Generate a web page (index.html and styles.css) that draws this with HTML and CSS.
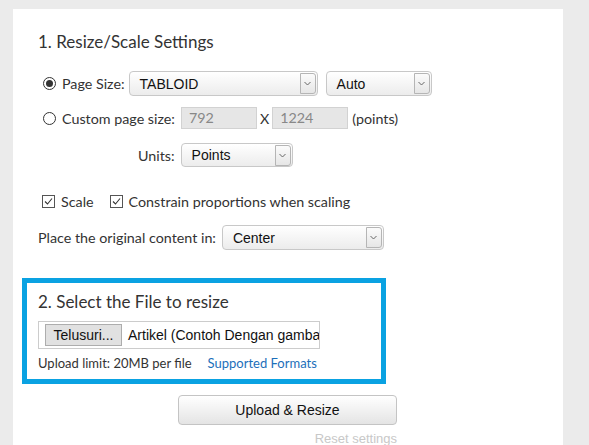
FILE: index.html
```html
<!DOCTYPE html>
<html>
<head>
<meta charset="utf-8">
<title>Resize PDF</title>
<link rel="stylesheet" href="styles.css">
</head>
<body>
  <div class="panel">
    <h2 class="step-title">1. Resize/Scale Settings</h2>

    <div class="row row-size">
      <span class="radio checked"></span>
      <span class="label">Page Size:</span>
      <div class="select sel-size"><span class="sel-text">TABLOID</span><span class="sel-arrow"><svg width="7" height="5" viewBox="0 0 7 5"><path d="M0.5 1 L3.5 4 L6.5 1" fill="none" stroke="#666" stroke-width="1"/></svg></span></div>
      <div class="select sel-orient"><span class="sel-text">Auto</span><span class="sel-arrow"><svg width="7" height="5" viewBox="0 0 7 5"><path d="M0.5 1 L3.5 4 L6.5 1" fill="none" stroke="#666" stroke-width="1"/></svg></span></div>
    </div>

    <div class="row row-custom">
      <span class="radio"></span>
      <span class="label">Custom page size:</span>
      <span class="num-input first">792</span>
      <span class="times">X</span>
      <span class="num-input">1224</span>
      <span class="label points">(points)</span>
    </div>

    <div class="row row-units">
      <span class="label">Units:</span>
      <div class="select sel-units"><span class="sel-text">Points</span><span class="sel-arrow"><svg width="7" height="5" viewBox="0 0 7 5"><path d="M0.5 1 L3.5 4 L6.5 1" fill="none" stroke="#666" stroke-width="1"/></svg></span></div>
    </div>

    <div class="row row-checks">
      <span class="check"><svg width="13" height="13" viewBox="0 0 13 13"><rect x="0.5" y="0.5" width="12" height="12" fill="#fff" stroke="#555"/><path d="M3 6.5 L5.5 9 L10 3.5" fill="none" stroke="#333" stroke-width="1.1"/></svg></span>
      <span class="label">Scale</span>
      <span class="check second"><svg width="13" height="13" viewBox="0 0 13 13"><rect x="0.5" y="0.5" width="12" height="12" fill="#fff" stroke="#555"/><path d="M3 6.5 L5.5 9 L10 3.5" fill="none" stroke="#333" stroke-width="1.1"/></svg></span>
      <span class="label">Constrain proportions when scaling</span>
    </div>

    <div class="row row-place">
      <span class="label">Place the original content in:</span>
      <div class="select sel-place"><span class="sel-text">Center</span><span class="sel-arrow"><svg width="7" height="5" viewBox="0 0 7 5"><path d="M0.5 1 L3.5 4 L6.5 1" fill="none" stroke="#666" stroke-width="1"/></svg></span></div>
    </div>

    <div class="file-box">
      <h2 class="step-title">2. Select the File to resize</h2>
      <div class="file-input">
        <span class="browse">Telusuri...</span>
        <span class="file-name">Artikel (Contoh Dengan gamba</span>
      </div>
      <div class="limits">
        <span>Upload limit: 20MB per file</span>
        <a class="formats" href="#">Supported Formats</a>
      </div>
    </div>

    <div class="actions">
      <span class="upload-btn">Upload &amp; Resize</span>
      <span class="reset">Reset settings</span>
    </div>
  </div>
</body>
</html>
```

FILE: styles.css
```css
body {
  margin: 0;
  background: #ebebeb;
  font-family: "Lato", "Liberation Sans", sans-serif;
  color: #333;
  overflow: hidden;
}

.panel {
  margin: 9px 0 0 13px;
  width: 550px;
  height: 480px;
  background: #fff;
  padding: 23px 0 0 25px;
  box-sizing: border-box;
}

.step-title {
  margin: 0;
  font-size: 17px;
  font-weight: normal;
  line-height: 20px;
  color: #333;
}

.row {
  display: flex;
  align-items: center;
  font-size: 14.3px;
}

.label { white-space: nowrap; }

/* radio buttons */
.radio {
  width: 11px;
  height: 11px;
  border: 1px solid #333;
  border-radius: 50%;
  margin: 0 6px 0 5px;
  display: flex;
  align-items: center;
  justify-content: center;
  background: #fff;
}
.radio.checked::after {
  content: "";
  width: 7px;
  height: 7px;
  border-radius: 50%;
  background: #333;
}

/* fake selects */
.select {
  display: flex;
  align-items: center;
  box-sizing: border-box;
  height: 25px;
  border: 1px solid #c8c8c8;
  border-radius: 4px;
  background: linear-gradient(#fff, #ececec);
  font-family: "Liberation Sans", Arial, sans-serif;
  font-size: 14px;
  color: #111;
  padding: 0 1px 0 10px;
}
.sel-text { flex: 1; }
.sel-arrow {
  width: 16px;
  height: 21px;
  box-sizing: border-box;
  border: 1px solid #b5b5b5;
  border-radius: 0 3px 3px 0;
  background: linear-gradient(#fbfbfb, #e6e6e6);
  display: flex;
  align-items: center;
  justify-content: center;
}

.row-size { margin-top: 19px; }
.sel-size { width: 189px; margin-left: 4px; }
.sel-orient { width: 106px; margin-left: 8px; }

.row-custom { margin-top: 11px; }
.num-input {
  box-sizing: border-box;
  width: 76px;
  height: 22px;
  background: #e6e6e6;
  border: 1px solid #d2d2d2;
  color: #888;
  font-size: 14.3px;
  line-height: 20px;
  padding-left: 7px;
}
.num-input.first { margin-left: 6px; }
.times { margin: 0 3px 0 3px; }
.points { margin-left: 4px; }

.row-units { margin-top: 14px; padding-left: 100px; }
.sel-units { width: 112px; height: 24px; margin-left: 6px; }

.row-checks { margin-top: 24px; height: 20px; }
.check { display: flex; margin: 0 6px 0 4px; }
.check.second { margin-left: 16px; }

.row-place { margin-top: 14px; }
.sel-place { width: 162px; margin-left: 6px; }

/* file section */
.file-box {
  margin: 28px 0 0 -16px;
  width: 364px;
  height: 106px;
  box-sizing: border-box;
  border: 5px solid #0aa2e2;
  padding: 9px 0 0 11px;
}
.file-input {
  margin-top: 9px;
  width: 282px;
  height: 28px;
  box-sizing: border-box;
  border: 1px solid #ccc;
  display: flex;
  align-items: center;
  padding-left: 6px;
  overflow: hidden;
  white-space: nowrap;
  font-family: "Liberation Sans", Arial, sans-serif;
  font-size: 14px;
  color: #111;
}
.browse {
  flex: none;
  box-sizing: border-box;
  width: 77px;
  height: 22px;
  border: 1px solid #adadad;
  background: #e1e1e1;
  text-align: center;
  line-height: 20px;
  margin-right: 6px;
}
.limits {
  margin-top: 6px;
  font-size: 13px;
  display: flex;
  gap: 16px;
}
.formats { color: #1c6fba; text-decoration: none; }

/* submit */
.actions {
  width: 219px;
  margin: 11px 0 0 140px;
  display: flex;
  flex-direction: column;
  align-items: flex-end;
}
.upload-btn {
  box-sizing: border-box;
  width: 219px;
  height: 30px;
  border: 1px solid #c4c4c4;
  border-radius: 4px;
  background: linear-gradient(#fff, #e4e4e4);
  text-align: center;
  line-height: 28px;
  font-family: "Liberation Sans", Arial, sans-serif;
  font-size: 14px;
  color: #111;
}
.reset {
  margin-top: 6px;
  font-family: "Liberation Sans", Arial, sans-serif;
  font-size: 13px;
  color: #c8c8c8;
}
```
